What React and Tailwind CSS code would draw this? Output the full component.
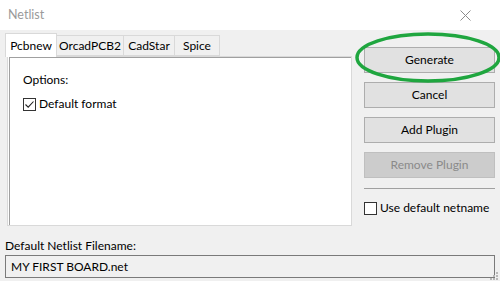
import React from 'react';

const font = { fontFamily: 'Lato, "Noto Sans", sans-serif' };

const Check = ({ checked }) => (
  <span className="w-[13px] h-[13px] border border-[#333333] bg-white flex items-center justify-center shrink-0">
    {checked && (
      <svg width="11" height="11" viewBox="0 0 11 11">
        <path d="M1.5 5.5 L4.2 8.2 L9.5 2.5" fill="none" stroke="#222" strokeWidth="1.1" />
      </svg>
    )}
  </span>
);

const Btn = ({ children, disabled }) => (
  <div
    className={
      'h-[26px] flex items-center justify-center border ' +
      (disabled
        ? 'bg-[#cccccc] border-[#bfbfbf] text-[#8a8a8a]'
        : 'bg-[#e1e1e1] border-[#adadad] text-black')
    }
  >
    {children}
  </div>
);

const tabs = ['OrcadPCB2', 'CadStar', 'Spice'];

export default function App() {
  return (
    <div className="w-[500px] h-[281px] bg-[#f0f0f0] relative overflow-hidden flex flex-col text-black text-[12px] whitespace-nowrap" style={font}>
      {/* title bar */}
      <div className="h-[30px] bg-white flex items-center justify-between pl-[8px] pr-[29px] shrink-0">
        <span className="text-[12.5px] text-[#9a9a9a]">Netlist</span>
        <svg width="11" height="11" viewBox="0 0 11 11">
          <path d="M0.5 0.5 L10.5 10.5 M10.5 0.5 L0.5 10.5" stroke="#8c8c8c" strokeWidth="1" />
        </svg>
      </div>

      <div className="flex h-[196px] shrink-0">
        {/* tab control */}
        <div className="ml-[5px] mt-[3px] flex flex-col w-[347px]">
          <div className="flex items-end h-[23px]">
            <div className="h-[24px] -mb-px z-10 bg-white border border-b-0 border-[#d9d9d9] w-[52px] flex items-center justify-center">
              Pcbnew
            </div>
            {tabs.map((t, i) => (
              <div
                key={t}
                className={
                  'h-[21px] border border-l-0 border-[#d9d9d9] flex items-center justify-center ' +
                  ['w-[67px]', 'w-[51px]', 'w-[45px]'][i]
                }
              >
                {t}
              </div>
            ))}
          </div>
          <div className="ml-[2px] h-[170px] border border-[#d9d9d9] bg-white flex">
            <div className="flex-1 ml-[1px] border-t border-l border-[#a0a0a0] pl-[13px] pt-[13px] flex flex-col gap-[6px]">
              <div>Options:</div>
              <label className="flex items-center gap-[3px]">
                <Check checked />
                <span>Default format</span>
              </label>
            </div>
          </div>
        </div>

        {/* buttons */}
        <div className="ml-[12px] w-[131px] pt-[17px] flex flex-col gap-[9px]">
          <Btn>Generate</Btn>
          <Btn>Cancel</Btn>
          <Btn>Add Plugin</Btn>
          <Btn disabled>Remove Plugin</Btn>
          <div className="h-px bg-[#a0a0a0] mt-px" />
          <label className="flex items-center gap-[3px] mt-[1px]">
            <Check />
            <span>Use default netname</span>
          </label>
        </div>
      </div>

      {/* filename */}
      <div className="px-[5px] mt-[12px]">
        <div className="h-[16px] leading-[16px]">Default Netlist Filename:</div>
        <div className="mt-[1px] h-[23px] border border-[#7a7a7a] bg-[#f0f0f0] flex items-center pl-[5px]">
          MY FIRST BOARD.net
        </div>
      </div>

      {/* resize grip */}
      <svg className="absolute right-[2px] bottom-[1px]" width="10" height="10" viewBox="0 0 10 10">
        <rect x="8" y="2" width="2" height="2" fill="#b8b8b8" />
        <rect x="5" y="5" width="2" height="2" fill="#b8b8b8" />
        <rect x="8" y="5" width="2" height="2" fill="#b8b8b8" />
        <rect x="2" y="8" width="2" height="2" fill="#b8b8b8" />
        <rect x="5" y="8" width="2" height="2" fill="#b8b8b8" />
        <rect x="8" y="8" width="2" height="2" fill="#b8b8b8" />
      </svg>

      {/* green annotation ellipse */}
      <svg className="absolute left-[355px] top-[32px] pointer-events-none" width="146" height="51" viewBox="0 0 146 51">
        <ellipse cx="73" cy="25.5" rx="71" ry="23.5" fill="none" stroke="#1fa63f" strokeWidth="3.5" />
      </svg>
    </div>
  );
}
